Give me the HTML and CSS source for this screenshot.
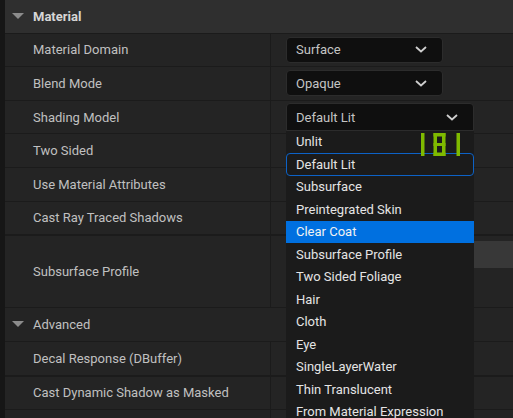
FILE: index.html
```html
<!DOCTYPE html>
<html>
<head>
<meta charset="utf-8">
<link rel="stylesheet" href="styles.css">
</head>
<body>
<div class="panel">
  <div class="cat"><span class="tri"></span><span class="cat-title">Material</span></div>
  <div class="row"><div class="label">Material Domain</div><div class="value"><div class="combo combo-sm"><span>Surface</span><svg class="chev" viewBox="0 0 12 7"><path d="M1 1 L6 5.5 L11 1" /></svg></div></div></div>
  <div class="row"><div class="label">Blend Mode</div><div class="value"><div class="combo combo-sm"><span>Opaque</span><svg class="chev" viewBox="0 0 12 7"><path d="M1 1 L6 5.5 L11 1" /></svg></div></div></div>
  <div class="row"><div class="label">Shading Model</div><div class="value"><div class="combo combo-lg open"><span>Default Lit</span><svg class="chev" viewBox="0 0 12 7"><path d="M1 1 L6 5.5 L11 1" /></svg></div></div></div>
  <div class="row"><div class="label">Two Sided</div><div class="value"></div></div>
  <div class="row"><div class="label">Use Material Attributes</div><div class="value"></div></div>
  <div class="row thick"><div class="label">Cast Ray Traced Shadows</div><div class="value"></div></div>
  <div class="row tall"><div class="label">Subsurface Profile</div><div class="value"><div class="asset"></div></div></div>
  <div class="subcat"><span class="tri"></span><span>Advanced</span></div>
  <div class="row thick"><div class="label">Decal Response (DBuffer)</div><div class="value"></div></div>
  <div class="row"><div class="label">Cast Dynamic Shadow as Masked</div><div class="value"></div></div>
  <div class="row"><div class="label"></div><div class="value"></div></div>
</div>

<div class="menu">
  <div class="item">Unlit</div>
  <div class="item current">Default Lit</div>
  <div class="item">Subsurface</div>
  <div class="item">Preintegrated Skin</div>
  <div class="item hover">Clear Coat</div>
  <div class="item">Subsurface Profile</div>
  <div class="item">Two Sided Foliage</div>
  <div class="item">Hair</div>
  <div class="item">Cloth</div>
  <div class="item">Eye</div>
  <div class="item">SingleLayerWater</div>
  <div class="item">Thin Translucent</div>
  <div class="item">From Material Expression</div>
</div>

<svg class="marker" viewBox="0 0 40 23" width="40" height="23">
  <rect x="0" y="0" width="3.5" height="23" />
  <rect x="12.5" y="0" width="12" height="3.5" />
  <rect x="12.5" y="10" width="12" height="3" />
  <rect x="12.5" y="19.5" width="12" height="3.5" />
  <rect x="12.5" y="0" width="3.5" height="23" />
  <rect x="21" y="0" width="3.5" height="23" />
  <rect x="35.5" y="0" width="3.5" height="23" />
</svg>
</body>
</html>
```

FILE: styles.css
```css
html, body {
  margin: 0;
  padding: 0;
}
body {
  width: 513px;
  height: 418px;
  overflow: hidden;
  background: #161616;
  font-family: Roboto, "Noto Sans", "Liberation Sans", sans-serif;
  font-size: 13px;
  color: #c0c0c0;
  position: relative;
}
.panel {
  margin-left: 5px;
  height: 418px;
  overflow: hidden;
  display: flex;
  flex-direction: column;
  background: #1b1b1b;
}
.cat {
  height: 32.6px;
  flex-shrink: 0;
  margin-bottom: 1px;
  background: #2f2f2f;
  display: flex;
  align-items: center;
  color: #d6d6d6;
  font-weight: bold;
}
.subcat {
  height: 33.3px;
  flex-shrink: 0;
  margin-bottom: 1px;
  background: #242424;
  display: flex;
  align-items: center;
}
.tri {
  width: 0;
  height: 0;
  margin-left: 7px;
  margin-right: 9px;
  border-left: 6px solid transparent;
  border-right: 6px solid transparent;
  border-top: 6.5px solid #8c8c8c;
}
.row {
  height: 32.6px;
  margin-bottom: 1px;
  display: flex;
  flex-shrink: 0;
}
.row.thick {
  margin-bottom: 2px;
}
.row.tall {
  height: 70.5px;
  margin-bottom: 1px;
}
.label {
  width: 265px;
  padding-left: 28px;
  box-sizing: border-box;
  background: #242424;
  display: flex;
  align-items: center;
  white-space: nowrap;
}
.value {
  flex: 1;
  margin-left: 1px;
  background: #242424;
  display: flex;
  align-items: center;
  padding-left: 15px;
  min-width: 0;
}
.tall .value {
  align-items: flex-start;
}
.asset {
  margin-top: 5px;
  margin-left: 40px;
  height: 27px;
  flex: 1;
  background: #383838;
}
.combo {
  height: 26px;
  box-sizing: border-box;
  background: #0f0f0f;
  border: 1px solid #2c2c2c;
  border-radius: 4px;
  display: flex;
  align-items: center;
  justify-content: space-between;
  padding: 0 15px 0 9px;
  color: #c4c4c4;
}
.combo-sm {
  width: 157px;
}
.combo-lg {
  width: 188px;
  height: 27.5px;
  border-bottom-left-radius: 0;
  border-bottom-right-radius: 0;
  padding-right: 15px;
}
.chev {
  width: 12px;
  height: 7px;
  fill: none;
  stroke: #cfcfcf;
  stroke-width: 1.8;
}
.menu {
  position: absolute;
  left: 286px;
  top: 130.5px;
  bottom: 0;
  width: 188px;
  overflow: hidden;
  background: #1b1b1b;
  display: flex;
  flex-direction: column;
}
.item {
  height: 22.5px;
  flex-shrink: 0;
  box-sizing: border-box;
  padding-left: 10px;
  display: flex;
  align-items: center;
  color: #e4e4e4;
  white-space: nowrap;
}
.item.current {
  border: 1px solid #0d62c6;
  border-radius: 4px;
  padding-left: 9px;
}
.item.hover {
  background: #0070e0;
  color: #f2f2f2;
}
.marker {
  position: absolute;
  left: 420.5px;
  top: 133px;
  fill: #7fba00;
}
```
